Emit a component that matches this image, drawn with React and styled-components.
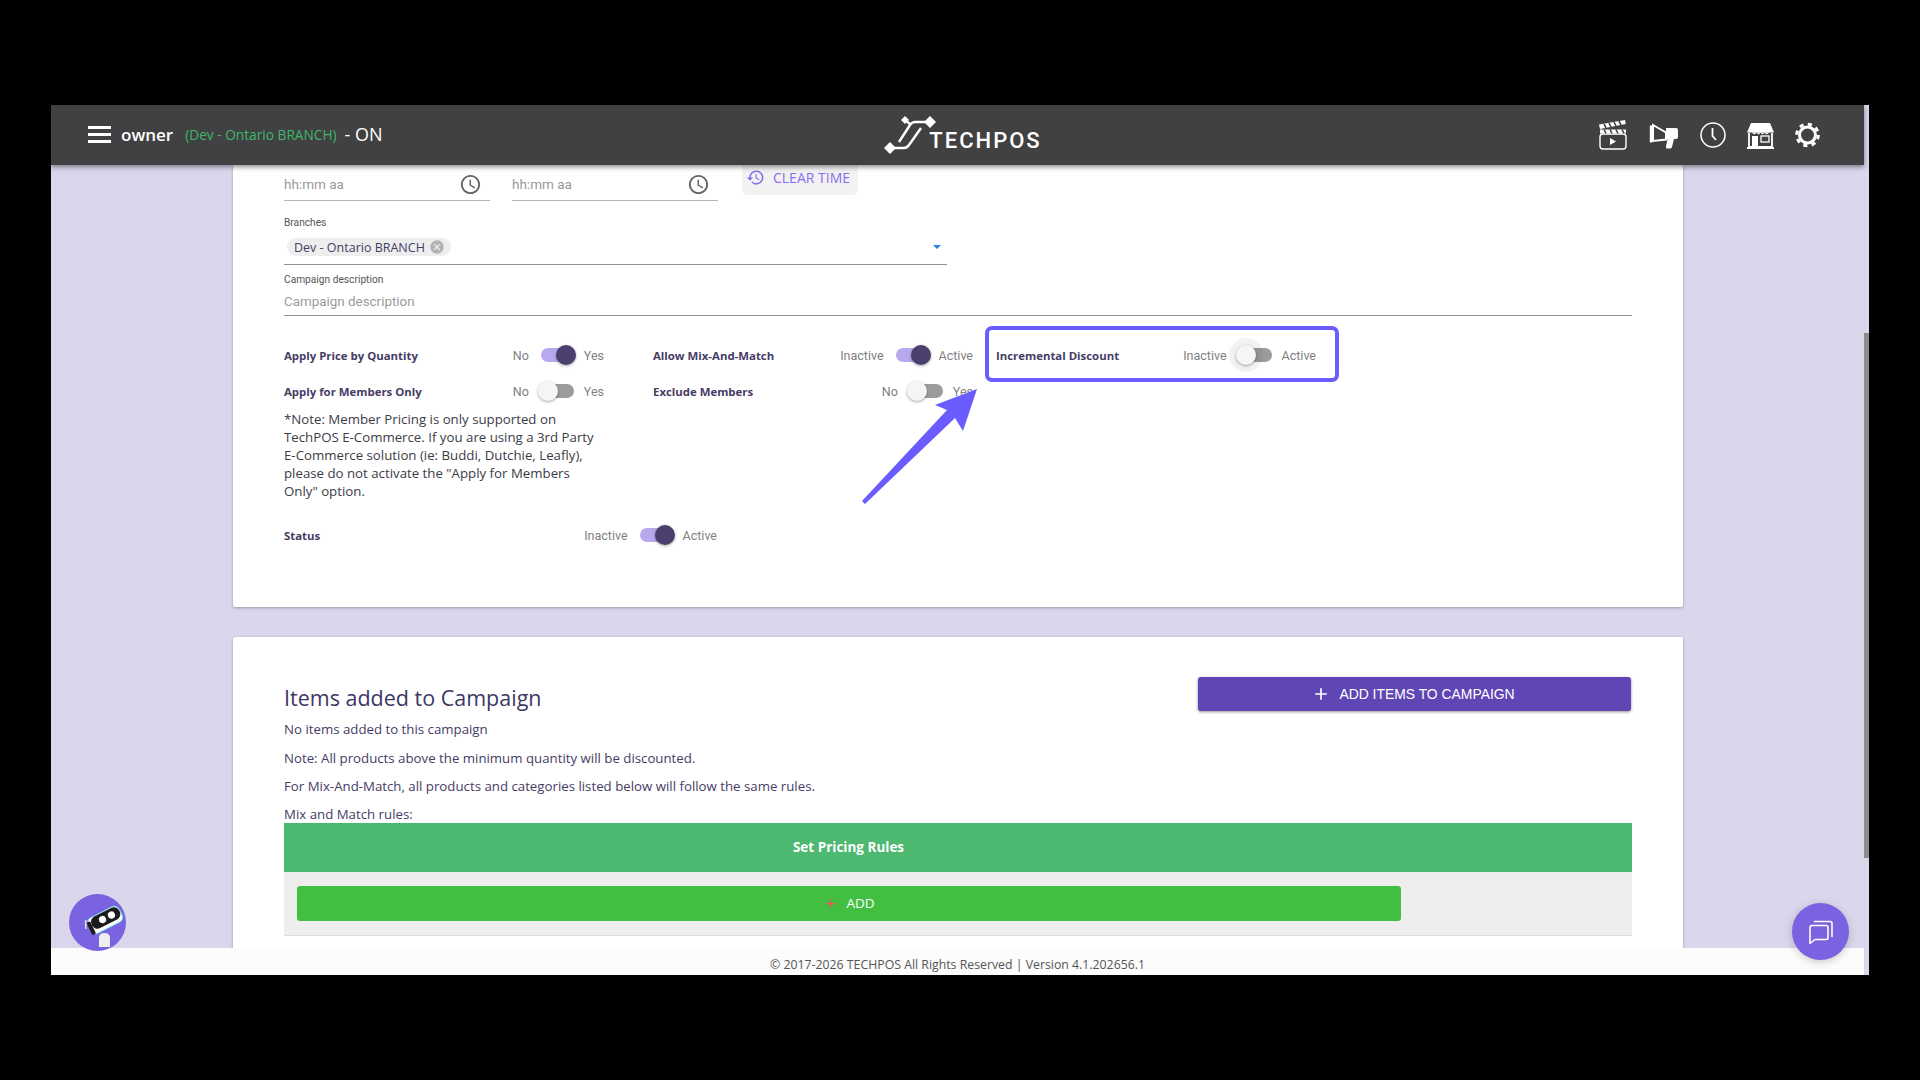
import React from 'react';
import styled, { createGlobalStyle } from 'styled-components';
import { MdAccessTime, MdAdd, MdCancel, MdHistory } from 'react-icons/md';

const GlobalStyle = createGlobalStyle`
    html, body {
        margin: 0;
        height: 100%;
        background: #000;
        overflow: hidden;
    }
    #root {
        padding: 105px 0 0 51px;
    }
`

function Logo() {
    return (
        <LogoWrap>
            <svg width="52" height="40" viewBox="0 0 52 40" fill="none" stroke="#fff" strokeWidth="2.4">
                <path d="M42 7H31q-3 0-5 3L15 27" />
                <path d="M7 33H20q3 0 5-3L37 13" />
                <path d="M21 5l5 4" />
                <path d="M21 1l4 4-4 4-4-4z" fill="#fff" stroke="none" />
                <path d="M46 1l6 6-6 6-6-6z" fill="#fff" stroke="none" />
                <path d="M6 27l6 6-6 6-6-6z" fill="#fff" stroke="none" />
            </svg>
            <LogoText>TECHPOS</LogoText>
        </LogoWrap>
    )
}

function ClapperIcon() {
    return (
        <svg width="30" height="30" viewBox="0 0 30 30" fill="none" stroke="#fff">
            <rect x="2" y="14" width="26" height="15" rx="3" strokeWidth="1.4" />
            <path d="M2 9.5h26v4H2z" fill="#fff" stroke="none" />
            <path d="M1 4.5L27 0l.8 4L2 9z" fill="#fff" stroke="none" />
            <path d="M6 3.8l2 4M11 3l2 4M16 2l2 4M21 1.200l2 4M6 9.500l2 4M12 9.500l2 4M18 9.500l2 4M24 9.500l2 4" stroke="#414042" strokeWidth="1.600" />
            <path d="M12 18l6 3.500-6 3.500z" fill="#fff" stroke="none" />
        </svg>
    )
}

function MegaphoneIcon() {
    return (
        <svg width="30" height="30" viewBox="0 0 30 30" fill="none">
            <path d="M2 5.500v17" stroke="#fff" strokeWidth="2.400" />
            <path d="M4 5l13 7.500v7L4 21z" stroke="#fff" strokeWidth="2" />
            <path d="M17 8h10q2 0 2 2v7q0 2-2 2h-2l-2 8q-.5 1.500-2 1.500h-3q-1.500 0-1-2l1.500-7.500H17z" fill="#fff" />
        </svg>
    )
}

function ClockIcon() {
    return (
        <svg width="26" height="30" viewBox="0 0 26 30" fill="none" stroke="#fff">
            <circle cx="13" cy="15" r="12" strokeWidth="1.500" />
            <path d="M12.500 8v8l3.500 4" strokeWidth="1.800" />
        </svg>
    )
}

function StoreIcon() {
    return (
        <svg width="27" height="30" viewBox="0 0 27 30" fill="none" stroke="#fff">
            <path d="M4 3h19l4 9.500H0z" fill="#fff" stroke="none" />
            <path d="M5 12.500q2.500 3 4.500 0q2 3 4 0q2 3 4 0q2 3 4.500 0" fill="#fff" stroke="#fff" strokeWidth=".5" />
            <path d="M2 13v14h23V13" strokeWidth="1.800" />
            <rect x="5" y="16" width="6" height="11" fill="#fff" stroke="none" />
            <rect x="14" y="16" width="8" height="6" strokeWidth="1.300" />
            <path d="M0 28h27" strokeWidth="2" />
        </svg>
    )
}

function GearIcon() {
    return (
        <svg width="25" height="30" viewBox="0 0 25 30" fill="none" stroke="#fff">
            <circle cx="12.500" cy="15" r="8" strokeWidth="3" />
            <circle cx="12.500" cy="15" r="10.800" strokeWidth="3" strokeDasharray="4.200 4.280" />
        </svg>
    )
}

function BotIcon() {
    return (
        <svg width="57" height="57" viewBox="0 0 57 57">
            <text x="15" y="35" fill="#fff" fontSize="12" fontFamily="'Open Sans', sans-serif">H</text>
            <g transform="rotate(-27 36 26)">
                <rect x="18" y="17" width="36" height="18" rx="6" fill="#7ee7ee" />
                <rect x="19" y="18" width="34" height="16" rx="5" fill="#fff" />
                <rect x="22" y="18" width="31" height="13" rx="6" fill="#1b1b1b" />
                <rect x="18" y="20" width="4" height="14" rx="1.500" fill="#1b1b1b" />
                <circle cx="34" cy="24.500" r="3.600" fill="#fff" />
                <circle cx="44" cy="24.500" r="3.600" fill="#fff" />
            </g>
            <path d="M30 53V44q0-5 5.500-5t5.500 5v9z" fill="#eee" />
        </svg>
    )
}

function ChatIcon() {
    return (
        <svg width="26" height="26" viewBox="0 0 26 26" fill="none" stroke="#fff" strokeWidth="1.600" strokeLinecap="round" strokeLinejoin="round">
            <path d="M2 8.500a2 2 0 0 1 2-2h14a2 2 0 0 1 2 2v10a2 2 0 0 1-2 2H7l-5 4z" />
            <path d="M6.500 2.500H22a2 2 0 0 1 2 2v13" />
        </svg>
    )
}

function ToggleRow({ label, off, on, checked, focused, wide }) {
    return (
        <Option $wide={wide}>
            <OptionLabel>{label}</OptionLabel>
            <OptionText>{off}</OptionText>
            <Switch $checked={checked} $focused={focused} />
            <OptionText>{on}</OptionText>
        </Option>
    )
}

function TimeInput() {
    return (
        <TimeField>
            <Placeholder>hh:mm aa</Placeholder>
            <MdAccessTime size={23} color="#666" />
        </TimeField>
    )
}

export default function App() {
    return (
        <Frame>
            <GlobalStyle />
            <PageColumn>
                <Header>
                    <HeaderLeft>
                        <Burger><span /><span /><span /></Burger>
                        <Owner>owner</Owner>
                        <BranchName>(Dev - Ontario BRANCH)</BranchName>
                        <OnlineState>- ON</OnlineState>
                    </HeaderLeft>
                    <Logo />
                    <HeaderIcons>
                        <ClapperIcon />
                        <MegaphoneIcon />
                        <ClockIcon />
                        <StoreIcon />
                        <GearIcon />
                    </HeaderIcons>
                </Header>

                <Main>
                    <Card $height={442}>
                        <TimeRow>
                            <TimeInput />
                            <TimeInput />
                            <ClearTime>
                                <MdHistory size={19} />
                                CLEAR TIME
                            </ClearTime>
                        </TimeRow>

                        <SmallLabel>Branches</SmallLabel>
                        <SelectField>
                            <Chip>
                                Dev - Ontario BRANCH
                                <MdCancel size={16} color="#b3b3b3" />
                            </Chip>
                            <Caret />
                        </SelectField>

                        <SmallLabel $top={8}>Campaign description</SmallLabel>
                        <TextField>Campaign description</TextField>

                        <OptionGrid>
                            <ToggleRow label="Apply Price by Quantity" off="No" on="Yes" checked />
                            <ToggleRow label="Allow Mix-And-Match" off="Inactive" on="Active" checked />
                            <ToggleRow label="Incremental Discount" off="Inactive" on="Active" focused />
                            <ToggleRow label="Apply for Members Only" off="No" on="Yes" />
                            <ToggleRow label="Exclude Members" off="No" on="Yes" />
                        </OptionGrid>

                        <MemberNote>
                            *Note: Member Pricing is only supported on TechPOS E-Commerce. If you are using a 3rd Party
                            E-Commerce solution (ie: Buddi, Dutchie, Leafly), please do not activate the "Apply for Members Only" option.
                        </MemberNote>

                        <StatusRow>
                            <ToggleRow label="Status" off="Inactive" on="Active" checked wide />
                        </StatusRow>
                    </Card>

                    <Card $top={30} $bottom={60}>
                        <ItemsHead>
                            <ItemsTitle>Items added to Campaign</ItemsTitle>
                            <AddItemsButton>
                                <MdAdd size={20} />
                                ADD ITEMS TO CAMPAIGN
                            </AddItemsButton>
                        </ItemsHead>
                        <ItemsText>No items added to this campaign</ItemsText>
                        <ItemsText>Note: All products above the minimum quantity will be discounted.</ItemsText>
                        <ItemsText>For Mix-And-Match, all products and categories listed below will follow the same rules.</ItemsText>
                        <ItemsText $last>Mix and Match rules:</ItemsText>
                        <RulesHead>Set Pricing Rules</RulesHead>
                        <RulesBody>
                            <AddRuleButton>
                                <MdAdd size={15} color="#ff4d5e" />
                                ADD
                            </AddRuleButton>
                        </RulesBody>
                    </Card>
                </Main>

                <Footer>© 2017-2026 TECHPOS All Rights Reserved | Version 4.1.202656.1</Footer>
            </PageColumn>

            <ScrollTrack>
                <ScrollThumb />
            </ScrollTrack>

            <Highlight />
            <Arrow viewBox="0 0 125 125" width="125" height="125">
                <polygon points="122,4 80,20 92,25 7,116 10,119 100,33 108,46" fill="#6a5cff" />
            </Arrow>

            <BotButton><BotIcon /></BotButton>
            <ChatButton><ChatIcon /></ChatButton>
        </Frame>
    )
}

const Frame = styled.div`
    position: relative;
    width: 1818px;
    height: 870px;
    display: flex;
    background: #dad7ec;
    overflow: hidden;
    font-family: 'Open Sans', sans-serif;
    color: #463c66;
`

const PageColumn = styled.div`
    width: 1813px;
    display: flex;
    flex-direction: column;
`

const Header = styled.header`
    position: relative;
    z-index: 2;
    height: 60px;
    flex-shrink: 0;
    display: grid;
    grid-template-columns: 1fr auto 1fr;
    align-items: center;
    padding: 0 44px 0 37px;
    background: #414042;
    box-shadow: 0 2px 5px rgba(0, 0, 0, 0.45);
`

const HeaderLeft = styled.div`
    display: flex;
    align-items: center;
    padding-bottom: 2px;
`

const Burger = styled.div`
    width: 23px;
    margin-right: 10px;
    display: flex;
    flex-direction: column;
    gap: 4px;

    span {
        height: 3px;
        background: #fff;
    }
`

const Owner = styled.span`
    font-size: 17px;
    font-weight: 600;
    color: #fff;
`

const OnlineState = styled.span`
    font-size: 18px;
    color: #fff;
`

const BranchName = styled.span`
    margin: 0 8px 0 12px;
    font-size: 13.700px;
    color: #3db868;
`

const LogoWrap = styled.div`
    display: flex;
    align-items: flex-end;
    margin-left: 18px;
    height: 40px;
`

const LogoText = styled.span`
    margin: 0 0 3px -7px;
    font-family: 'Roboto', sans-serif;
    font-size: 22px;
    line-height: 22px;
    font-weight: 500;
    letter-spacing: 2px;
    color: #fff;
`

const HeaderIcons = styled.div`
    justify-self: end;
    display: flex;
    align-items: center;
    gap: 21px;
`

const Main = styled.main`
    flex: 1;
    min-height: 0;
    overflow: hidden;
    padding: 0 181px 0 182px;
`

const Card = styled.section`
    height: ${({ $height }) => ($height ? `${$height}px` : 'auto')};
    margin-top: ${({ $top }) => $top || 0}px;
    padding: 0 51px ${({ $bottom }) => $bottom || 0}px;
    background: #fff;
    border-radius: 2px;
    box-shadow: 0 1px 3px rgba(0, 0, 0, 0.3);
`

const TimeRow = styled.div`
    display: flex;
    align-items: flex-start;
    gap: 22px;
`

const TimeField = styled.div`
    width: 198px;
    height: 32px;
    display: flex;
    align-items: center;
    justify-content: space-between;
    padding: 3px 8px 0 0;
    border-bottom: 1px solid #b5b5b5;
`

const Placeholder = styled.span`
    font-family: 'Roboto', sans-serif;
    font-size: 13.500px;
    color: #999;
`

const ClearTime = styled.div`
    width: 116px;
    height: 30px;
    margin-left: 2px;
    padding: 0 4px 5px 0;
    display: flex;
    align-items: center;
    justify-content: center;
    gap: 8px;
    box-sizing: border-box;
    background: #f2f2f2;
    border-radius: 0 0 5px 5px;
    font-size: 14px;
    white-space: nowrap;
    color: #8a6df0;
`

const SmallLabel = styled.div`
    margin-top: ${({ $top }) => $top ?? 15}px;
    font-family: 'Roboto', sans-serif;
    font-size: 10.200px;
    line-height: 14px;
    color: #555;
`

const SelectField = styled.div`
    width: 663px;
    height: 35px;
    display: flex;
    align-items: flex-start;
    justify-content: space-between;
    padding: 8px 6px 0 3px;
    box-sizing: border-box;
    border-bottom: 1px solid #8f8f8f;
    margin-bottom: 1px;
`

const Chip = styled.div`
    height: 18px;
    display: flex;
    align-items: center;
    gap: 4px;
    padding: 0 6px 0 7px;
    background: #eee;
    border-radius: 9px;
    font-size: 12.500px;
    color: #463c66;
`

const Caret = styled.span`
    width: 0;
    height: 0;
    margin-top: 7px;
    border-left: 4px solid transparent;
    border-right: 4px solid transparent;
    border-top: 4px solid #2a7de1;
`

const TextField = styled.div`
    height: 21px;
    padding-top: 7px;
    font-family: 'Roboto', sans-serif;
    font-size: 13.400px;
    line-height: 16px;
    color: #9b9b9b;
    border-bottom: 1px solid #8f8f8f;
`

const OptionGrid = styled.div`
    margin-top: 21px;
    display: grid;
    grid-template-columns: 369px 343px 320px;
    grid-auto-rows: 36px;
`

const Option = styled.div`
    width: ${({ $wide }) => ($wide ? 433 : 320)}px;
    height: 36px;
    display: flex;
    align-items: center;
`

const OptionLabel = styled.span`
    flex: 1;
    font-size: 11.400px;
    font-weight: 700;
    color: #463c66;
`

const OptionText = styled.span`
    font-family: 'Roboto', sans-serif;
    font-size: 12.500px;
    color: #7f7f7f;
`

const Switch = styled.span`
    position: relative;
    width: 38px;
    height: 20px;
    margin: 0 8px 0 9px;

    &::before {
        content: '';
        position: absolute;
        top: 3px;
        left: 3px;
        width: 33px;
        height: 14px;
        border-radius: 7px;
        background: ${({ $checked }) => ($checked ? '#b8a9ee' : '#9c9c9c')};
    }

    &::after {
        content: '';
        position: absolute;
        top: 0;
        left: ${({ $checked }) => ($checked ? 18 : 0)}px;
        width: 20px;
        height: 20px;
        border-radius: 50%;
        background: ${({ $checked }) => ($checked ? '#4b3f6e' : '#f5f5f5')};
        box-shadow: 0 1px 3px rgba(0, 0, 0, 0.35)${({ $focused }) => ($focused ? ', 0 0 0 7px rgba(0, 0, 0, 0.05)' : '')};
    }
`

const MemberNote = styled.p`
    width: 320px;
    margin: 1px 0 0;
    font-size: 13.250px;
    line-height: 18px;
    color: #3c3c46;
`

const StatusRow = styled.div`
    margin-top: 17px;
`

const ItemsHead = styled.div`
    display: flex;
    align-items: flex-start;
    justify-content: space-between;
    padding-top: 40px;
`

const ItemsTitle = styled.h2`
    margin: 7px 0 0;
    font-size: 21.500px;
    line-height: 28px;
    font-weight: 400;
    color: #3d3763;
`

const AddItemsButton = styled.div`
    width: 433px;
    height: 34px;
    margin-right: 1px;
    padding-right: 3px;
    box-sizing: border-box;
    display: flex;
    align-items: center;
    justify-content: center;
    gap: 8px;
    background: #5f46b4;
    border-radius: 3px;
    box-shadow: 0 1px 3px rgba(0, 0, 0, 0.45);
    font-family: 'Liberation Sans', sans-serif;
    font-size: 13.900px;
    color: #fff;
`

const ItemsText = styled.p`
    margin: ${({ $last }) => ($last ? '0' : '0 0 8.500px')};
    font-size: 13.250px;
    line-height: ${({ $last }) => ($last ? 18 : 20)}px;
    color: #463c66;

    &:first-of-type {
        margin-top: 7px;
    }
`

const RulesHead = styled.div`
    height: 49px;
    display: flex;
    align-items: center;
    justify-content: center;
    padding-right: 219px;
    background: #4cb870;
    font-size: 13.500px;
    font-weight: 700;
    color: #fff;
`

const RulesBody = styled.div`
    padding: 14px 13px;
    background: #eee;
    border-bottom: 1px solid #ddd;
`

const AddRuleButton = styled.div`
    width: 1104px;
    height: 35px;
    display: flex;
    align-items: center;
    justify-content: center;
    gap: 8px;
    background: #41bf41;
    border-radius: 3px;
    font-size: 13.500px;
    color: #fff;
`

const Footer = styled.footer`
    position: relative;
    z-index: 1;
    height: 27px;
    flex-shrink: 0;
    padding-top: 8px;
    box-sizing: border-box;
    background: #fcfcfc;
    text-align: center;
    font-size: 12.300px;
    line-height: 17px;
    color: #555;
`

const ScrollTrack = styled.div`
    width: 5px;
    background: #dad7ec;
`

const ScrollThumb = styled.div`
    height: 525px;
    margin-top: 228px;
    background: #8c8c8c;
`

const Highlight = styled.div`
    position: absolute;
    z-index: 3;
    top: 221px;
    left: 934px;
    width: 354px;
    height: 56px;
    box-sizing: border-box;
    border: 4px solid #6a5cff;
    border-radius: 7px;
`

const Arrow = styled.svg`
    position: absolute;
    z-index: 3;
    top: 280px;
    left: 804px;
`

const FloatingButton = styled.div`
    position: absolute;
    z-index: 4;
    width: 57px;
    height: 57px;
    display: flex;
    align-items: center;
    justify-content: center;
    border-radius: 50%;
    background: #7a62e0;
`

const BotButton = styled(FloatingButton)`
    left: 18px;
    bottom: 24px;
`

const ChatButton = styled(FloatingButton)`
    right: 20px;
    bottom: 15px;
    box-shadow: 0 2px 8px rgba(0, 0, 0, 0.2);
`
